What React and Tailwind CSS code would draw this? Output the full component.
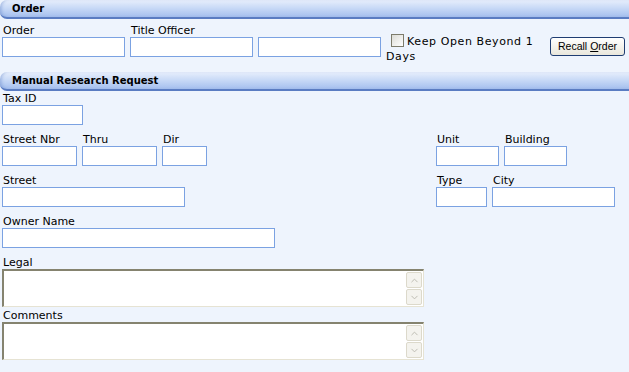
import { ChevronUp, ChevronDown } from 'lucide-react';

const SectionBar = ({ title }) => (
  <div className="h-[19px] rounded-l-[7px] border-b-2 border-[#5a7cc2] bg-linear-to-b from-[#e8effc] via-[#c6d8f6] to-[#a5bfee] pl-[12px] flex items-center text-[10px] font-bold text-black leading-none shadow-[inset_3px_0_3px_-1px_rgba(90,124,194,0.35)]">
    {title}
  </div>
);

const Field = ({ label, width, className = '' }) => (
  <div className={`flex flex-col ${className}`}>
    <span className="h-[12px] leading-[12px] pl-px whitespace-nowrap">{label}</span>
    <div className={`h-[20px] border border-[#7ba2e2] bg-white ${width}`} />
  </div>
);

const TextBox = ({ label, className = '' }) => (
  <div className={`flex flex-col ${className}`}>
    <span className="h-[12px] leading-[12px] pl-px">{label}</span>
    <div className="w-[422px] h-[38px] flex bg-white border-t-2 border-l-2 border-t-[#85836f] border-l-[#85836f] border-r border-b border-r-[#e6e3d3] border-b-[#e6e3d3]">
      <div className="flex-1" />
      <div className="w-[17px] flex flex-col gap-px pt-px pr-px">
        <div className="h-[16px] bg-[#f4f3ee] border border-[#dcd9cb] rounded-[2px] flex items-center justify-center">
          <ChevronUp className="w-[11px] h-[11px] text-[#b9b8ae]" strokeWidth={2} />
        </div>
        <div className="h-[16px] bg-[#f4f3ee] border border-[#dcd9cb] rounded-[2px] flex items-center justify-center">
          <ChevronDown className="w-[11px] h-[11px] text-[#b9b8ae]" strokeWidth={2} />
        </div>
      </div>
    </div>
  </div>
);

const App = () => {
  return (
    <div className="w-[629px] h-[372px] bg-[#eef4fd] text-[11px] text-black overflow-hidden" style={{ fontFamily: '"DejaVu Sans", Verdana, sans-serif' }}>
      {/* Order */}
      <SectionBar title="Order" />
      <div className="h-[53px] px-[2px] pt-[6px] flex items-start">
        <Field label="Order" width="w-[123px]" />
        <Field label="Title Officer" width="w-[123px]" className="ml-[5px]" />
        <Field label="" width="w-[123px]" className="ml-[5px]" />
        <div className="ml-[5px] mt-[9px] w-[164px] leading-[15px]">
          <span className="inline-block align-[-2px] ml-[5px] mr-[3px] w-[13px] h-[13px] border border-[#7d7c6c] bg-linear-to-br from-[#dcdcd6] to-white" />
          <span className="tracking-[0.6px]">Keep Open Beyond 1 Days</span>
        </div>
        <button
          className="mt-[12px] w-[75px] h-[19px] rounded-[3px] border border-[#1f3d72] bg-linear-to-b from-white to-[#e9e7dc] text-[10.5px] leading-none text-black"
          style={{ fontFamily: '"Liberation Sans", Arial, sans-serif' }}
        >
          Recall <span className="underline">O</span>rder
        </button>
      </div>

      {/* Manual Research Request */}
      <SectionBar title="Manual Research Request" />
      <div className="px-[2px] pt-[2px]">
        <Field label="Tax ID" width="w-[81px]" />

        <div className="mt-[9px] flex">
          <div className="w-[434px] flex">
            <Field label="Street Nbr" width="w-[75px]" />
            <Field label="Thru" width="w-[75px]" className="ml-[5px]" />
            <Field label="Dir" width="w-[45px]" className="ml-[5px]" />
          </div>
          <Field label="Unit" width="w-[63px]" />
          <Field label="Building" width="w-[63px]" className="ml-[5px]" />
        </div>

        <div className="mt-[9px] flex">
          <div className="w-[434px] flex">
            <Field label="Street" width="w-[183px]" />
          </div>
          <Field label="Type" width="w-[51px]" />
          <Field label="City" width="w-[123px]" className="ml-[5px]" />
        </div>

        <Field label="Owner Name" width="w-[273px]" className="mt-[9px]" />

        <TextBox label="Legal" className="mt-[9px]" />
        <TextBox label="Comments" className="mt-[3px]" />
      </div>
    </div>
  );
};

export default App;
